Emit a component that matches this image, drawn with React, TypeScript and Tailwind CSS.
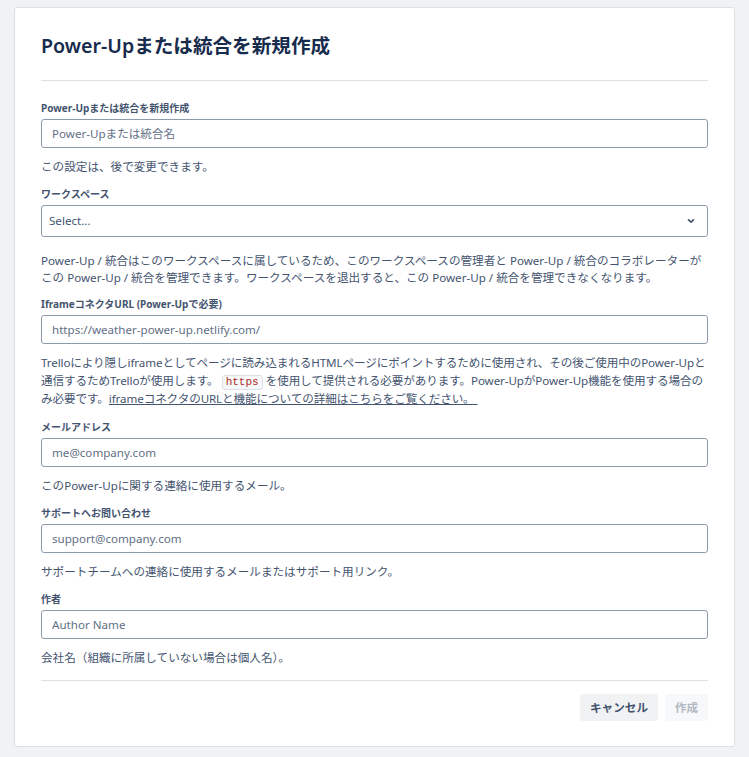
import React from "react";

const font = { fontFamily: '"Noto Sans", "Noto Sans CJK JP", sans-serif' };

function Label({ children }: { children: React.ReactNode }) {
  return (
    <label className="block text-[10px] leading-[14px] font-bold text-[#44546f]">{children}</label>
  );
}

function Input({ placeholder }: { placeholder: string }) {
  return (
    <input
      className="mt-[4px] block h-[29px] w-full rounded-[3px] border border-[#8c9bab] bg-white px-[10px] text-[11.6px] text-[#172b4d] placeholder:text-[#626f86] outline-none"
      placeholder={placeholder}
      style={font}
    />
  );
}

function Help({ children, className = "" }: { children: React.ReactNode; className?: string }) {
  return <p className={"mt-[10px] text-[11.6px] leading-[17px] text-[#44546f] " + className}>{children}</p>;
}

export default function App() {
  return (
    <div className="min-h-screen bg-[#f1f2f4] px-[14px] pt-[7px] pb-[10px]" style={font}>
      <div className="rounded-[3px] border border-[#dcdfe4] bg-white px-[26px] pt-[24px] pb-[25px]">
        <h1 className="text-[19.6px] leading-[28px] font-semibold text-[#172b4d]">Power-Upまたは統合を新規作成</h1>
        <div className="mt-[20px] h-px bg-[#dcdfe4]" />

        <div className="mt-[20px]">
          <Label>Power-Upまたは統合を新規作成</Label>
          <Input placeholder="Power-Upまたは統合名" />
          <Help>この設定は、後で変更できます。</Help>
        </div>

        <div className="mt-[12px]">
          <Label>ワークスペース</Label>
          <div className="mt-[4px] flex h-[32px] items-center justify-between rounded-[3px] border border-[#8c9bab] bg-white pl-[7px] pr-[11px]">
            <span className="text-[11.6px] text-[#44546f]">Select...</span>
            <svg width="10" height="10" viewBox="0 0 10 10" fill="none">
              <path d="M2.5 3.8 L5 6.2 L7.5 3.8" stroke="#44546f" strokeWidth="1.6" strokeLinecap="round" strokeLinejoin="round" />
            </svg>
          </div>
          <Help className="!mt-[15px]">
            Power-Up / 統合はこのワークスペースに属しているため、このワークスペースの管理者と Power-Up / 統合のコラボレーターが この Power-Up / 統合を管理できます。ワークスペースを退出すると、この Power-Up / 統合を管理できなくなります。
          </Help>
        </div>

        <div className="mt-[11px]">
          <Label>IframeコネクタURL (Power-Upで必要)</Label>
          <Input placeholder="https://weather-power-up.netlify.com/" />
          <p className="mt-[10px] text-[11.6px] leading-[18px] tracking-[-0.1px] text-[#44546f]">
            Trelloにより隠しiframeとしてページに読み込まれるHTMLページにポイントするために使用され、その後ご使用中のPower-Upと
            <br />
            通信するためTrelloが使用します。
            <code
              className="mx-[3px] inline-block rounded-[3px] border border-[#dcdfe4] bg-[#f7f8f9] px-[3px] text-[11px] leading-[13px] tracking-normal text-[#ae2e24]"
              style={{ fontFamily: '"Liberation Mono", monospace' }}
            >
              https
            </code>
            を使用して提供される必要があります。Power-UpがPower-Up機能を使用する場合の
            <br />
            み必要です。
            <a className="underline text-[#44546f]" href="#">
              iframeコネクタのURLと機能についての詳細はこちらをご覧ください。&nbsp;
            </a>
          </p>
        </div>

        <div className="mt-[12px]">
          <Label>メールアドレス</Label>
          <Input placeholder="me@company.com" />
          <Help>このPower-Upに関する連絡に使用するメール。</Help>
        </div>

        <div className="mt-[12px]">
          <Label>サポートへお問い合わせ</Label>
          <Input placeholder="support@company.com" />
          <Help>サポートチームへの連絡に使用するメールまたはサポート用リンク。</Help>
        </div>

        <div className="mt-[12px]">
          <Label>作者</Label>
          <Input placeholder="Author Name" />
          <Help>会社名（組織に所属していない場合は個人名）。</Help>
        </div>

        <div className="mt-[14px] h-px bg-[#dcdfe4]" />
        <div className="mt-[13px] flex justify-end gap-[7px]">
          <button className="h-[27px] w-[78px] rounded-[3px] bg-[#f1f2f4] text-[11.6px] font-semibold text-[#44546f]">キャンセル</button>
          <button className="h-[27px] w-[43px] rounded-[3px] bg-[#f7f8f9] text-[11.6px] font-semibold text-[#b3b9c4]">作成</button>
        </div>
      </div>
    </div>
  );
}
